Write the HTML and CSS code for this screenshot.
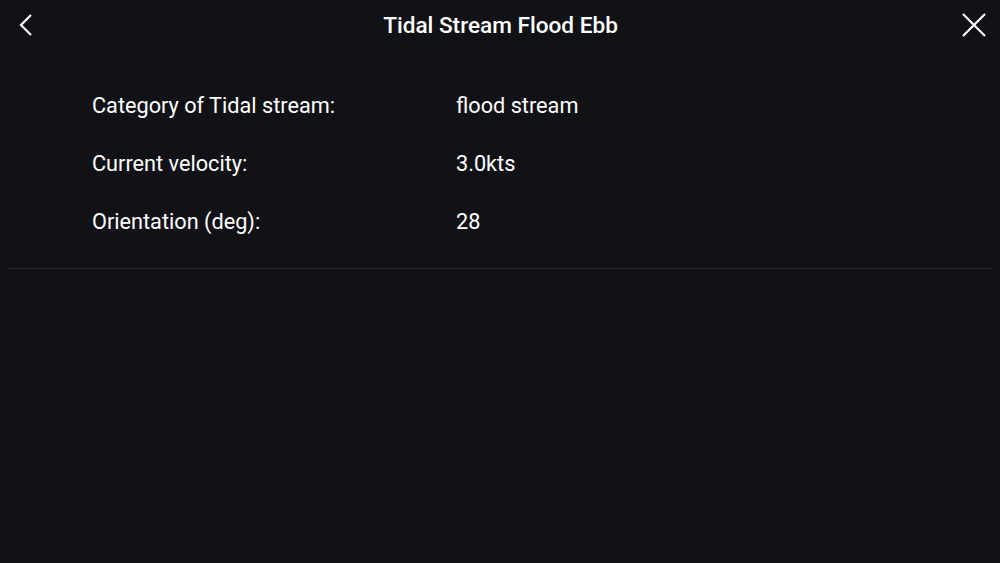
FILE: index.html
```html
<!DOCTYPE html>
<html lang="en">
<head>
  <meta charset="UTF-8">
  <meta name="viewport" content="width=device-width, initial-scale=1.0">
  <title>Tidal Stream Flood Ebb</title>
  <link rel="stylesheet" href="styles.css">
</head>
<body>

<div class="header">
  <button class="icon-btn" aria-label="Back">
    <svg width="24" height="24" viewBox="0 0 24 24"><path d="M16 2 L6 12 L16 22" fill="none" stroke="#fff" stroke-width="2.2"/></svg>
  </button>
  <h1 class="title">Tidal Stream Flood Ebb</h1>
  <button class="icon-btn" aria-label="Close">
    <svg width="26" height="26" viewBox="0 0 26 26"><path d="M2 2 L24 24 M24 2 L2 24" fill="none" stroke="#fff" stroke-width="2.2"/></svg>
  </button>
</div>

<div class="details">
  <div class="row">
    <span class="label">Category of Tidal stream:</span>
    <span class="value">flood stream</span>
  </div>
  <div class="row">
    <span class="label">Current velocity:</span>
    <span class="value">3.0kts</span>
  </div>
  <div class="row">
    <span class="label">Orientation (deg):</span>
    <span class="value">28</span>
  </div>
</div>

<div class="divider"></div>

</body>
</html>
```

FILE: styles.css
```css
body {
  margin: 0;
  height: 100vh;
  background-color: #111216;
  color: #fff;
  font-family: Roboto, "Noto Sans", sans-serif;
}
.header {
  display: flex;
  align-items: center;
  justify-content: space-between;
  height: 50px;
  padding: 0 13px 0 14px;
}
.icon-btn {
  background: none;
  border: none;
  padding: 0;
  width: 26px;
  height: 26px;
  display: flex;
  align-items: center;
  justify-content: center;
}
.title {
  margin: 0;
  font-size: 22.6px;
  font-weight: 500;
}
.details {
  padding: 43px 0 0 92px;
}
.row {
  display: flex;
  height: 58px;
  align-items: flex-start;
  font-size: 21.7px;
}
.label {
  width: 364px;
}
.divider {
  margin: 1px 8px 0;
  border-top: 1px solid #2b2c30;
}
```
